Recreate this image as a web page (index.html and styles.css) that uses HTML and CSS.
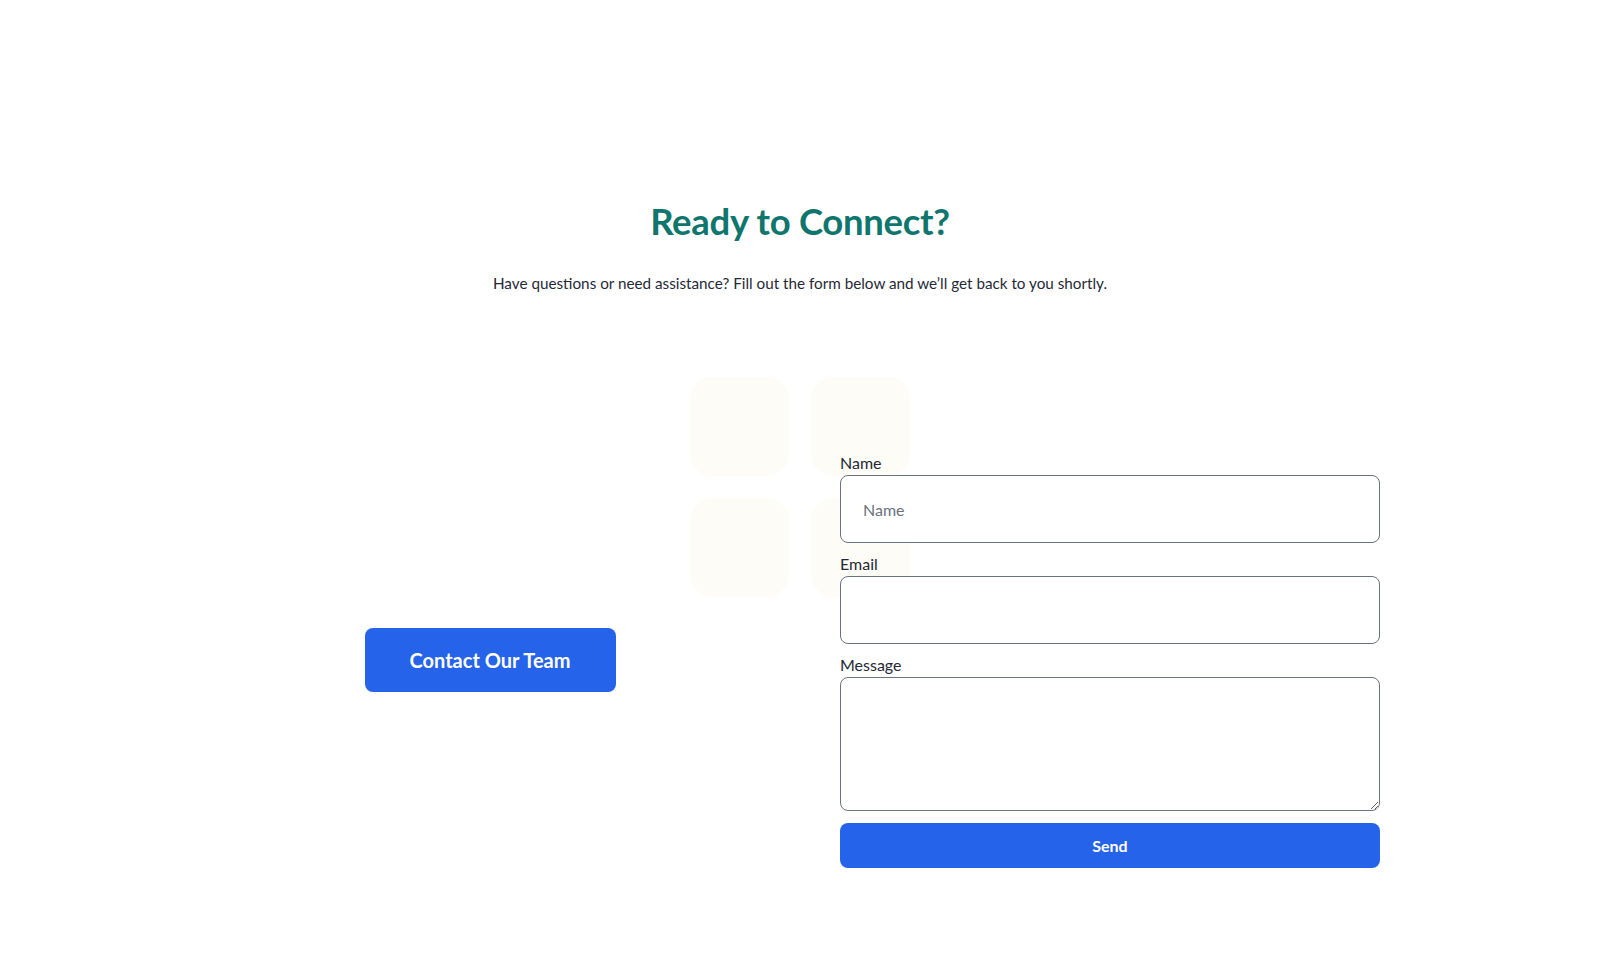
FILE: index.html
```html
<!DOCTYPE html>
<html lang="en">
<head>
<meta charset="utf-8">
<title>Ready to Connect?</title>
<link rel="stylesheet" href="styles.css">
</head>
<body>
<main class="page">
  <section class="contact">
    <h1 class="title">Ready to Connect?</h1>
    <p class="subtitle">Have questions or need assistance? Fill out the form below and we’ll get back to you shortly.</p>
    <div class="row">
      <div class="deco" aria-hidden="true">
        <span class="tile"></span><span class="tile"></span><span class="tile"></span><span class="tile"></span>
      </div>
      <div class="col col-left">
        <button class="cta" type="button">Contact Our Team</button>
      </div>
      <form class="col form">
        <div class="field">
          <label class="label" for="name">Name</label>
          <input class="input" id="name" type="text" placeholder="Name">
        </div>
        <div class="field">
          <label class="label" for="email">Email</label>
          <input class="input" id="email" type="email">
        </div>
        <div class="field">
          <label class="label" for="message">Message</label>
          <textarea class="input textarea" id="message"></textarea>
        </div>
        <button class="send" type="button">Send</button>
      </form>
    </div>
  </section>
</main>
</body>
</html>
```
FILE: styles.css
```css
* { box-sizing: border-box; }
html, body { margin: 0; padding: 0; background: #ffffff; }
body {
  font-family: Lato, "Noto Sans", "Liberation Sans", sans-serif;
  color: #1f2937;
}
.page {
  padding-top: 201px;
}
.contact {
  max-width: 1200px;
  margin: 0 auto;
  padding: 0 20px;
}
.title {
  margin: 0;
  text-align: center;
  font-size: 36.5px;
  line-height: 40px;
  font-weight: 700;
  color: #0f766e;
  letter-spacing: -0.3px;
}
.subtitle {
  margin: 30px 0 0;
  text-align: center;
  font-size: 15.25px;
  line-height: 24px;
  color: #1f2937;
}
.row {
  position: relative;
  margin-top: 156px;
  display: grid;
  grid-template-columns: 1fr 1fr;
  column-gap: 80px;
  align-items: center;
}
.deco {
  position: absolute;
  left: 50%;
  top: -74px;
  transform: translateX(-50%);
  display: grid;
  grid-template-columns: 99px 99px;
  gap: 22px;
  z-index: 0;
}
.tile {
  width: 99px;
  height: 99px;
  border-radius: 22px;
  background: #fdfcf6;
}
.col { position: relative; z-index: 1; }
.col-left {
  display: flex;
  justify-content: center;
}
.cta {
  width: 251px;
  height: 64px;
  border: 0;
  border-radius: 8px;
  background: #2563eb;
  color: #ffffff;
  font-family: inherit;
  font-size: 20px;
  font-weight: 700;
  cursor: pointer;
}
.form {
  display: flex;
  flex-direction: column;
}
.field {
  display: flex;
  flex-direction: column;
  margin-bottom: 9px;
}
.label {
  font-size: 16px;
  line-height: 24px;
  color: #1f2937;
}
.input {
  width: 100%;
  height: 68px;
  padding: 0 22px;
  border: 1px solid #6b7280;
  border-radius: 8px;
  background: #ffffff;
  font-family: inherit;
  font-size: 16px;
  color: #1f2937;
  outline: none;
}
.input::placeholder { color: #6b7280; }
.textarea {
  height: 134px;
  padding: 12px 22px;
  resize: vertical;
  display: block;
}
.send {
  margin-top: 3px;
  height: 45px;
  border: 0;
  border-radius: 8px;
  background: #2563eb;
  color: #ffffff;
  font-family: inherit;
  font-size: 16px;
  font-weight: 700;
  cursor: pointer;
}
```
